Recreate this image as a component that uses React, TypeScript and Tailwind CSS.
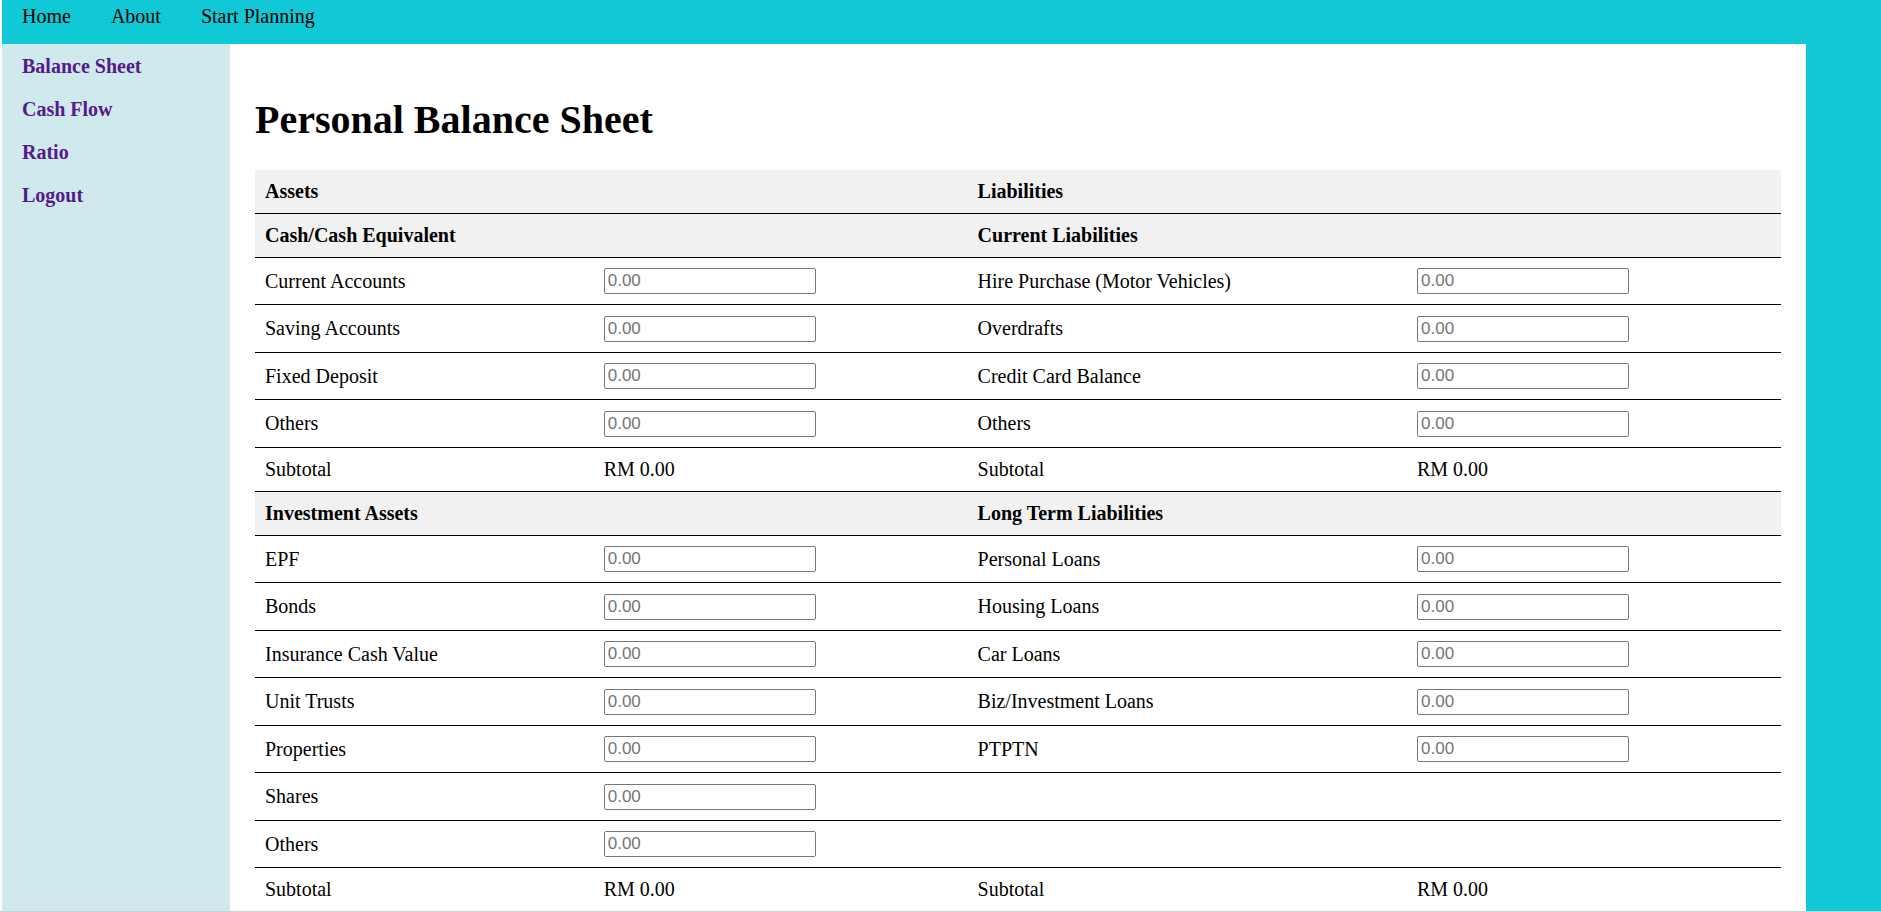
type Side = { label: string; kind: "heading" | "input" | "total" } | null;
type Row = { left: Side; right: Side };

const heading = (label: string): Side => ({ label, kind: "heading" });
const entry = (label: string): Side => ({ label, kind: "input" });
const total = (): Side => ({ label: "Subtotal", kind: "total" });

const rows: Row[] = [
  { left: heading("Assets"), right: heading("Liabilities") },
  { left: heading("Cash/Cash Equivalent"), right: heading("Current Liabilities") },
  { left: entry("Current Accounts"), right: entry("Hire Purchase (Motor Vehicles)") },
  { left: entry("Saving Accounts"), right: entry("Overdrafts") },
  { left: entry("Fixed Deposit"), right: entry("Credit Card Balance") },
  { left: entry("Others"), right: entry("Others") },
  { left: total(), right: total() },
  { left: heading("Investment Assets"), right: heading("Long Term Liabilities") },
  { left: entry("EPF"), right: entry("Personal Loans") },
  { left: entry("Bonds"), right: entry("Housing Loans") },
  { left: entry("Insurance Cash Value"), right: entry("Car Loans") },
  { left: entry("Unit Trusts"), right: entry("Biz/Investment Loans") },
  { left: entry("Properties"), right: entry("PTPTN") },
  { left: entry("Shares"), right: null },
  { left: entry("Others"), right: null },
  { left: total(), right: total() },
];

const navLinks = ["Home", "About", "Start Planning"];
const sideLinks = ["Balance Sheet", "Cash Flow", "Ratio", "Logout"];

const cell = "border-b border-black px-2.5 py-0 text-left align-middle group-last:border-b-0";

function Cells({ side, id }: { side: Side; id: string }) {
  if (!side) {
    return (
      <>
        <td className={cell} />
        <td className={cell} />
      </>
    );
  }
  if (side.kind === "heading") {
    return (
      <th colSpan={2} className={`${cell} bg-[#f1f1f1] font-bold`}>
        {side.label}
      </th>
    );
  }
  if (side.kind === "total") {
    return (
      <>
        <td className={cell}>{side.label}</td>
        <td className={cell}>RM 0.00</td>
      </>
    );
  }
  return (
    <>
      <td className={cell}>
        <label htmlFor={id}>{side.label}</label>
      </td>
      <td className={cell}>
        <input
          id={id}
          type="text"
          inputMode="decimal"
          placeholder="0.00"
          className="block h-[26px] w-[212px] max-w-full rounded-[2px] border border-[#767676] bg-white px-[3px] font-['Liberation_Sans',Arial,sans-serif] text-[17px] leading-5 placeholder:text-[#757575]"
        />
      </td>
    </>
  );
}

export default function App() {
  return (
    <div className="flex min-h-screen flex-col border-b border-[#cfcfd6] bg-white pl-0.5 font-['Liberation_Serif','Times_New_Roman',serif] text-[20px] leading-[23px] text-black">
      <nav className="flex h-11 items-start bg-[#11c8d6] pt-[5px]">
        {navLinks.map((link) => (
          <a key={link} href="#" className="px-5">
            {link}
          </a>
        ))}
      </nav>
      <div className="flex grow bg-[#11c8d6]">
        <aside className="flex w-[228px] shrink-0 flex-col bg-[#cfe9ec] pt-px">
          {sideLinks.map((link) => (
            <a key={link} href="#" className="px-5 py-2.5 font-bold text-[#551a8b]">
              {link}
            </a>
          ))}
        </aside>
        <main className="mr-[4%] min-w-0 grow bg-white px-[25px] pt-[53px]">
          <h1 className="mb-[27px] text-[40px] leading-[46px] font-bold">Personal Balance Sheet</h1>
          <table className="w-full table-fixed border-separate border-spacing-0">
            <colgroup>
              <col className="w-[22.2%]" />
              <col className="w-[24.5%]" />
              <col className="w-[28.8%]" />
              <col />
            </colgroup>
            <tbody>
              {rows.map((row, i) => (
                <tr
                  key={i}
                  className={
                    row.left?.kind === "input"
                      ? "group odd:h-[47px] even:h-12"
                      : "group h-11 last:h-[43px]"
                  }
                >
                  <Cells side={row.left} id={`asset-${i}`} />
                  <Cells side={row.right} id={`liability-${i}`} />
                </tr>
              ))}
            </tbody>
          </table>
        </main>
      </div>
    </div>
  );
}
